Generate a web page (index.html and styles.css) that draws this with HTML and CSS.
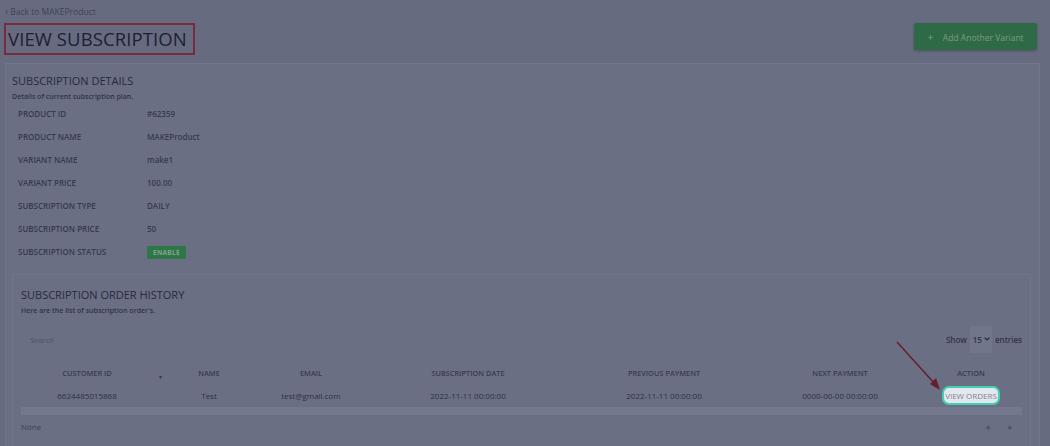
FILE: index.html
```html
<!DOCTYPE html>
<html lang="en">
<head>
    <meta charset="UTF-8">
    <title>View Subscription</title>
    <link rel="stylesheet" href="styles.css">
</head>
<body>
    <div class="page">
        <a class="back" href="#"><span class="chev">&lsaquo;</span> Back to MAKEProduct</a>

        <div class="page-head">
            <h1 class="title">VIEW SUBSCRIPTION</h1>
            <button class="btn-add"><span class="plus">+</span> Add Another Variant</button>
        </div>

        <div class="card">
            <h2>SUBSCRIPTION DETAILS</h2>
            <p class="sub">Details of current subscription plan.</p>

            <div class="details">
                <div class="label">PRODUCT ID</div><div class="value">#62359</div>
                <div class="label">PRODUCT NAME</div><div class="value">MAKEProduct</div>
                <div class="label">VARIANT NAME</div><div class="value">make1</div>
                <div class="label">VARIANT PRICE</div><div class="value">100.00</div>
                <div class="label">SUBSCRIPTION TYPE</div><div class="value">DAILY</div>
                <div class="label">SUBSCRIPTION PRICE</div><div class="value">50</div>
                <div class="label">SUBSCRIPTION STATUS</div><div class="value"><span class="badge">ENABLE</span></div>
            </div>

            <div class="card inner">
                <h2>SUBSCRIPTION ORDER HISTORY</h2>
                <p class="sub">Here are the list of subscription order's.</p>

                <div class="toolbar">
                    <span class="search">Search</span>
                    <span class="show">Show <span class="select">15 <svg width="6" height="4" viewBox="0 0 6 4"><path d="M0.6 0.6 L3 3 L5.4 0.6" fill="none" stroke="#23273c" stroke-width="1.2"/></svg></span> entries</span>
                </div>

                <div class="table">
                    <div class="row head">
                        <div class="cell first">CUSTOMER ID<span class="sort">&#9660;</span></div>
                        <div class="cell">NAME</div>
                        <div class="cell">EMAIL</div>
                        <div class="cell">SUBSCRIPTION DATE</div>
                        <div class="cell">PREVIOUS PAYMENT</div>
                        <div class="cell">NEXT PAYMENT</div>
                        <div class="cell">ACTION</div>
                    </div>
                    <div class="row body">
                        <div class="cell first">6624485015868</div>
                        <div class="cell">Test</div>
                        <div class="cell">test@gmail.com</div>
                        <div class="cell">2022-11-11 00:00:00</div>
                        <div class="cell">2022-11-11 00:00:00</div>
                        <div class="cell">0000-00-00 00:00:00</div>
                        <div class="cell"><a class="view-orders" href="#">VIEW ORDERS</a></div>
                    </div>
                    <div class="scrollbar"></div>
                </div>

                <div class="foot">
                    <span>None</span>
                    <span class="pager"><span>&laquo;</span><span>&raquo;</span></span>
                </div>
            </div>
        </div>
    </div>

    <!-- annotation arrow pointing at the action link -->
    <svg class="arrow" width="60" height="60" viewBox="0 0 60 60">
        <line x1="2" y1="2" x2="40" y2="44" stroke="#6a1b2e" stroke-width="1.5"/>
        <path d="M45 50 L35 44 L41 38 Z" fill="#6a1b2e"/>
    </svg>
</body>
</html>
```

FILE: styles.css
```css
body {
    margin: 0;
    background: #676b80;
    font-family: "Open Sans", "Liberation Sans", sans-serif;
    color: #30344a;
    height: 446px;
    overflow: hidden;
    position: relative;
}

.page {
    padding: 5px 10px 0 4px;
    height: 441px;
    overflow: hidden;
}

.back {
    display: block;
    font-size: 8.5px;
    color: #3f4358;
    text-decoration: none;
    margin-left: 1px;
    line-height: 12px;
}

.chev {
    font-size: 10px;
}

.page-head {
    display: flex;
    justify-content: space-between;
    align-items: flex-start;
    margin-top: 5px;
}

.title {
    margin: 0;
    font-size: 18.5px;
    font-weight: 400;
    color: #1c2036;
    letter-spacing: 0.1px;
    border: 2px solid #7a2a3e;
    padding: 1px 6px 1px 2px;
    line-height: 26px;
    width: 179px;
}

.btn-add {
    background: #2f6a47;
    color: #7e9987;
    border: none;
    border-radius: 2px;
    font-family: inherit;
    font-size: 8.5px;
    height: 27px;
    width: 123px;
    padding: 0;
    margin-right: 3px;
    box-shadow: 0 1px 3px rgba(0, 0, 0, 0.25);
}

.plus {
    font-size: 11px;
    margin-right: 7px;
}

.card {
    background: #6b6f84;
    border: 1px solid #72768b;
    margin-top: 8px;
    margin-left: 1px;
    padding: 9px 6px 0 6px;
}

.card h2 {
    margin: 0;
    font-size: 11px;
    font-weight: 400;
    color: #262a40;
    line-height: 16px;
}

.sub {
    margin: 3px 0 0 0;
    font-size: 7px;
    font-weight: 600;
    color: #2f3349;
    line-height: 10px;
}

.details {
    display: grid;
    grid-template-columns: 129px 1fr;
    grid-auto-rows: 23px;
    align-items: center;
    margin: 0 0 0 6px;
    font-size: 8px;
    font-weight: 600;
}

.label {
    color: #353a50;
}

.value {
    color: #353a50;
}

.badge {
    background: #2f7746;
    color: #7ea48b;
    font-size: 6.5px;
    font-weight: 700;
    padding: 2px 6px;
    border-radius: 1px;
    letter-spacing: 0.3px;
}

.card.inner {
    margin-top: 11px;
    margin-left: 0;
    margin-right: 2px;
    padding: 12px 8px 0 8px;
    height: 170px;
}

.toolbar {
    display: flex;
    justify-content: space-between;
    align-items: center;
    height: 28px;
    margin-top: 9px;
}

.search {
    font-style: italic;
    font-size: 8px;
    color: #4d5166;
    margin-left: 9px;
}

.show {
    font-size: 8px;
    font-weight: 600;
    color: #30344a;
    display: flex;
    align-items: center;
}

.select {
    display: inline-flex;
    align-items: center;
    gap: 2px;
    background: #72768b;
    height: 27px;
    padding: 0 2px 0 3px;
    margin: 0 3px;
    font-weight: 600;
}

.table {
    margin-top: 8px;
}

.row {
    display: grid;
    grid-template-columns: 132px 112px 92px 222px 170px 182px 80px;
    align-items: center;
    text-align: center;
}

.row.head {
    height: 23px;
    font-size: 7.4px;
    font-weight: 600;
    color: #373b51;
}

.row.body {
    height: 23px;
    font-size: 8px;
    color: #2c3046;
}

.cell.first {
    position: relative;
}

.sort {
    position: absolute;
    right: -10px;
    top: 6px;
    font-size: 5px;
    color: #2a3060;
}

.view-orders {
    display: inline-block;
    background: #e4e8ee;
    color: #7d8396;
    text-decoration: none;
    font-size: 8px;
    line-height: 15px;
    padding: 0 1px;
    border: 2.5px solid #3fd3ad;
    border-radius: 7px;
}

.scrollbar {
    height: 8px;
    background: #73788e;
}

.foot {
    display: flex;
    justify-content: space-between;
    align-items: center;
    margin-top: 5px;
    font-size: 8px;
    color: #3a3e53;
}

.pager {
    display: flex;
    gap: 17px;
    margin-right: 10px;
    font-size: 9px;
}

.arrow {
    position: absolute;
    left: 895px;
    top: 340px;
}
```
